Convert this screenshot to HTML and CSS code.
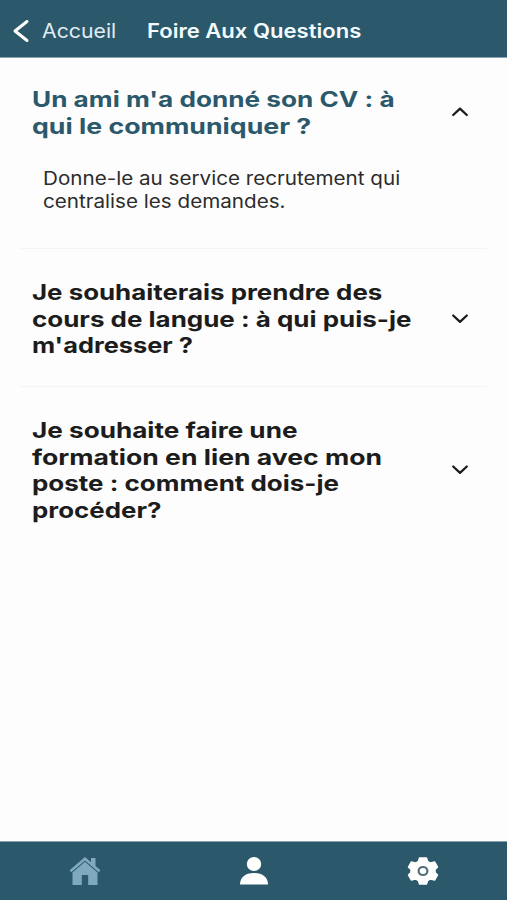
FILE: index.html
```html
<!DOCTYPE html>
<html lang="fr">
<head>
<meta charset="utf-8">
<title>Foire Aux Questions</title>
<link rel="stylesheet" href="styles.css">
</head>
<body>
<header class="topbar">
  <svg class="back" viewBox="0 0 18 26"><path d="M15 3.500 3 13l12 9.500"/></svg>
  <a class="back-label"><span class="wide">Accueil</span></a>
  <h1 class="page-title"><span class="wide">Foire Aux Questions</span></h1>
</header>
<main class="faq">
  <section class="item open">
    <div class="question">
      <h2><span class="line l1">Un ami m'a donné son CV : à</span><span class="line l2">qui le communiquer ?</span></h2>
      <svg class="chevron" viewBox="0 0 18 12"><path d="M2.200 9 9 2.600l6.800 6.400"/></svg>
    </div>
    <p class="answer"><span class="line">Donne-le au service recrutement qui</span><span class="line">centralise les demandes.</span></p>
  </section>
  <section class="item second">
    <div class="question">
      <h2><span class="line l3">Je souhaiterais prendre des</span><span class="line l4">cours de langue : à qui puis-je</span><span class="line l5">m'adresser ?</span></h2>
      <svg class="chevron" viewBox="0 0 18 12"><path d="M2.200 2.500 9 8.900l6.800-6.400"/></svg>
    </div>
  </section>
  <section class="item third">
    <div class="question">
      <h2><span class="line l6">Je souhaite faire une</span><span class="line l7">formation en lien avec mon</span><span class="line l8">poste : comment dois-je</span><span class="line l9">procéder?</span></h2>
      <svg class="chevron" viewBox="0 0 18 12"><path d="M2.200 2.500 9 8.900l6.800-6.400"/></svg>
    </div>
  </section>
</main>
<nav class="tabs">
  <a class="tab home"><svg viewBox="0 0 34 32"><path d="M17 2 1.500 15.200l1.800 2L17 5.600l13.700 11.600 1.800-2L27.500 11V3h-4.500v4.200z"/><path d="M17 6.800 4.500 17.400V30h9.300V20h6.400v10h9.300V17.400z"/></svg></a>
  <a class="tab"><svg viewBox="0 0 34 32"><ellipse cx="17" cy="9" rx="7.200" ry="7"/><path d="M3 29.500c0-7 5-11.500 14-11.500s14 4.500 14 11.500z"/></svg></a>
  <a class="tab"><svg viewBox="0 0 34 32"><path class="gear" d="M13.500 3h7l1 3.500 3 1.600 4.200-1.100 2.800 5-2.500 2.500v3l2.500 2.500-2.800 5-4.200-1.100-3 1.600-1 3.500h-7l-1-3.500-3-1.600L5.300 25l-2.800-5L5 17.500v-3L2.500 12l2.800-5 4.200 1.100 3-1.600z"/><ellipse class="hub" cx="17" cy="16" rx="4.400" ry="4"/></svg></a>
</nav>
</body>
</html>
```

FILE: styles.css
```css
* { box-sizing: border-box; }
body {
  margin: 0;
  height: 900px;
  display: flex;
  flex-direction: column;
  background: #fdfdfd;
  color: #1c1c1c;
  font-family: Inter, "Liberation Sans", sans-serif;
  font-feature-settings: "calt" 0;
  overflow: hidden;
}
.topbar {
  height: 58px;
  flex: none;
  display: flex;
  align-items: center;
  padding: 4px 0 0 12px;
  background: #2b596b;
  border-bottom: 1px solid #89a3ac;
  color: #fff;
}
.back { width: 18px; height: 26px; fill: none; stroke: #fff; stroke-width: 3; stroke-linecap: round; stroke-linejoin: round; }
.back-label { width: 105px; margin-left: 12px; font-size: 19.5px; color: #e1edf3; }
.page-title { margin: 0; font-size: 19.5px; font-weight: 600; color: #f3fbff; }
.wide { display: inline-block; transform: scaleX(1.09); transform-origin: left; white-space: nowrap; }
.page-title .wide { transform: scaleX(1.131); }
.faq { flex: 1; padding: 0 20px; }
.item { border-bottom: 1px solid #f4f4f4; }
.open { height: 191px; padding-top: 28px; }
.second { height: 138px; padding-top: 30px; }
.third { padding-top: 30px; border: 0; }
.question { display: flex; align-items: center; justify-content: space-between; padding: 0 18px 0 12px; }
h2 { margin: 0; font-size: 21.5px; line-height: 26.5px; font-weight: 700; }
.open h2 { color: #2b596b; }
.line { display: block; width: max-content; transform: scaleX(1.115); transform-origin: left; }
.l1 { transform: scaleX(1.216); }
.l2 { transform: scaleX(1.242); }
.l3 { transform: scaleX(1.203); }
.l4 { transform: scaleX(1.207); }
.l5 { transform: scaleX(1.18); }
.l6 { transform: scaleX(1.215); }
.l7 { transform: scaleX(1.236); }
.l8 { transform: scaleX(1.208); }
.l9 { transform: scaleX(1.203); }
.chevron { width: 18px; height: 12px; flex: none; fill: none; stroke: #1c1c1c; stroke-width: 2.3; stroke-linejoin: round; stroke-linecap: round; }
.open .chevron { margin-bottom: 2px; }
.answer { margin: 28px 0 0 23px; font-size: 18.5px; line-height: 23px; color: #2c2c2c; }
.tabs { height: 59px; flex: none; display: flex; background: #2b596b; border-top: 1px solid #89a3ac; }
.tab { flex: 1; display: flex; align-items: center; justify-content: center; }
.tab svg { width: 34px; height: 32px; fill: #fff; }
.home svg { fill: #80a9bd; }
.gear { stroke: #fff; stroke-width: 1.5; stroke-linejoin: round; }
.hub { fill: #fff; stroke: #526e77; stroke-width: 2.2; }
```
